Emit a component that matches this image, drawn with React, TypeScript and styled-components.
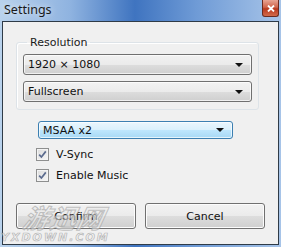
import styled, { createGlobalStyle } from "styled-components";

const Global = createGlobalStyle`
html, body { margin: 0; padding: 0; background: #fff; }
body { font-family: "DejaVu Sans", Verdana, sans-serif; }
`;

const Window = styled.div`
width: 281px;
height: 247px;
box-sizing: border-box;
display: flex;
flex-direction: column;
position: relative;
overflow: hidden;
background: linear-gradient(90deg, #b9d2ec 0%, #8fb3e0 25%, #3f74c0 48%, #6f9bd6 70%, #a7c4e8 100%);
padding: 0 2px 2px 2px;
`;

const TitleBar = styled.div`
height: 21px;
flex: none;
display: flex;
align-items: center;
justify-content: space-between;
`;

const Title = styled.span`
font-family: "Noto Sans", "Open Sans", sans-serif;
font-size: 12.5px;
color: #1a1a1a;
margin-left: 2px;
margin-top: -3px;
text-shadow: 0 0 6px #ffffffcc;
`;

const CloseBtn = styled.div`
width: 17px;
height: 17px;
margin-top: -4px;
box-sizing: border-box;
border: 1px solid #6b2a1f;
border-top: none;
border-radius: 0 0 3px 3px;
background: linear-gradient(180deg, #e8a493 0%, #d0654c 45%, #b8381e 55%, #d26a4a 100%);
display: flex;
align-items: center;
justify-content: center;
`;

const Client = styled.div`
flex: 1;
box-sizing: border-box;
border: 1px solid #2f3b47;
background: #f0f0f0;
display: flex;
flex-direction: column;
padding: 14px 0 0 13px;
`;

const Group = styled.fieldset`
width: 243px;
box-sizing: border-box;
margin: 0;
padding: 5px 5px 7px 6px;
border: 1px solid #dde3e8;
border-radius: 3px;
box-shadow: inset 1px 1px 0 #fff;
display: flex;
flex-direction: column;
gap: 6px;
`;

const Legend = styled.legend`
margin-left: 4px;
padding: 0 3px;
font-size: 11px;
color: #1a1a1a;
`;

const Combo = styled.div<{ $w: number; $h: number; $active?: boolean }>`
width: ${({ $w }) => $w}px;
height: ${({ $h }) => $h}px;
box-sizing: border-box;
border: 1px solid ${({ $active }) => ($active ? "#3c7fb1" : "#707070")};
border-radius: 3px;
background: ${({ $active }) =>
  $active
    ? "linear-gradient(180deg, #eaf6fd 0%, #d9f0fc 50%, #bee6fd 51%, #a7d9f5 100%)"
    : "linear-gradient(180deg, #f2f2f2 0%, #ebebeb 50%, #dddddd 51%, #cfcfcf 100%)"};
box-shadow: inset 0 0 0 1px #ffffffb0;
display: flex;
align-items: center;
justify-content: space-between;
padding: 0 8px 0 4px;
font-size: 11px;
color: #111;
`;

const Arrow = styled.span`
width: 0;
height: 0;
border-left: 4px solid transparent;
border-right: 4px solid transparent;
border-top: 4px solid #111;
`;

const Options = styled.div`
margin-left: 22px;
margin-top: 11px;
display: flex;
flex-direction: column;
`;

const Spacer = styled.div`
height: 5px;
`;

const CheckRow = styled.label`
display: flex;
align-items: center;
gap: 7px;
height: 21px;
margin-left: -2px;
font-size: 11px;
color: #111;
`;

const Box = styled.span`
width: 13px;
height: 13px;
box-sizing: border-box;
border: 1px solid #8e8f8f;
background: linear-gradient(135deg, #dcdcdc 0%, #f6f6f6 100%);
box-shadow: inset 0 0 0 1px #f4f4f4;
display: flex;
align-items: center;
justify-content: center;
`;

const Buttons = styled.div`
display: flex;
gap: 9px;
margin-top: 17px;
`;

const Button = styled.div`
width: 120px;
height: 26px;
box-sizing: border-box;
border: 1px solid #707070;
border-radius: 3px;
background: linear-gradient(180deg, #f2f2f2 0%, #ebebeb 50%, #dddddd 51%, #cfcfcf 100%);
box-shadow: inset 0 0 0 1px #fcfcfc;
display: flex;
align-items: center;
justify-content: center;
font-size: 11px;
color: #111;
`;

const Watermark = styled.div`
position: absolute;
left: 24px;
top: 198px;
font-family: "Noto Sans CJK SC", sans-serif;
font-size: 26px;
font-weight: 700;
font-style: italic;
letter-spacing: 1px;
color: rgba(235, 235, 235, 0.55);
-webkit-text-stroke: 1px rgba(150, 150, 150, 0.55);
transform: skewX(-12deg);
pointer-events: none;
`;

const WatermarkSub = styled.div`
position: absolute;
left: 1px;
top: 232px;
line-height: 12px;
font-family: "DejaVu Sans", sans-serif;
font-size: 11px;
font-weight: 700;
font-style: italic;
letter-spacing: 2px;
color: rgba(240, 240, 240, 0.5);
-webkit-text-stroke: 0.7px rgba(140, 140, 140, 0.6);
pointer-events: none;
`;

const Check = () => (
  <Box>
    <svg width="9" height="9" viewBox="0 0 9 9">
      <path d="M1.2 4.6 L3.4 7 L7.8 1.4" fill="none" stroke="#5b6b8e" strokeWidth="1.7" />
    </svg>
  </Box>
);

export default function App() {
  return (
    <Window>
      <Global />
      <TitleBar>
        <Title>Settings</Title>
        <CloseBtn>
          <svg width="8" height="7" viewBox="0 0 8 7">
            <path d="M1 0.5 L7 6.5 M7 0.5 L1 6.5" stroke="#fff" strokeWidth="1.8" />
          </svg>
        </CloseBtn>
      </TitleBar>
      <Client>
        <Group>
          <Legend>Resolution</Legend>
          <Combo $w={229} $h={21}>
            1920 × 1080
            <Arrow />
          </Combo>
          <Combo $w={229} $h={21}>
            Fullscreen
            <Arrow />
          </Combo>
        </Group>
        <Options>
          <Combo $w={195} $h={18} $active>
            MSAA x2
            <Arrow />
          </Combo>
          <Spacer />
          <CheckRow>
            <Check />
            V-Sync
          </CheckRow>
          <CheckRow>
            <Check />
            Enable Music
          </CheckRow>
        </Options>
        <Buttons>
          <Button>Confirm</Button>
          <Button>Cancel</Button>
        </Buttons>
      </Client>
      <Watermark>游迅网</Watermark>
      <WatermarkSub>YXDOWN.COM</WatermarkSub>
    </Window>
  );
}
